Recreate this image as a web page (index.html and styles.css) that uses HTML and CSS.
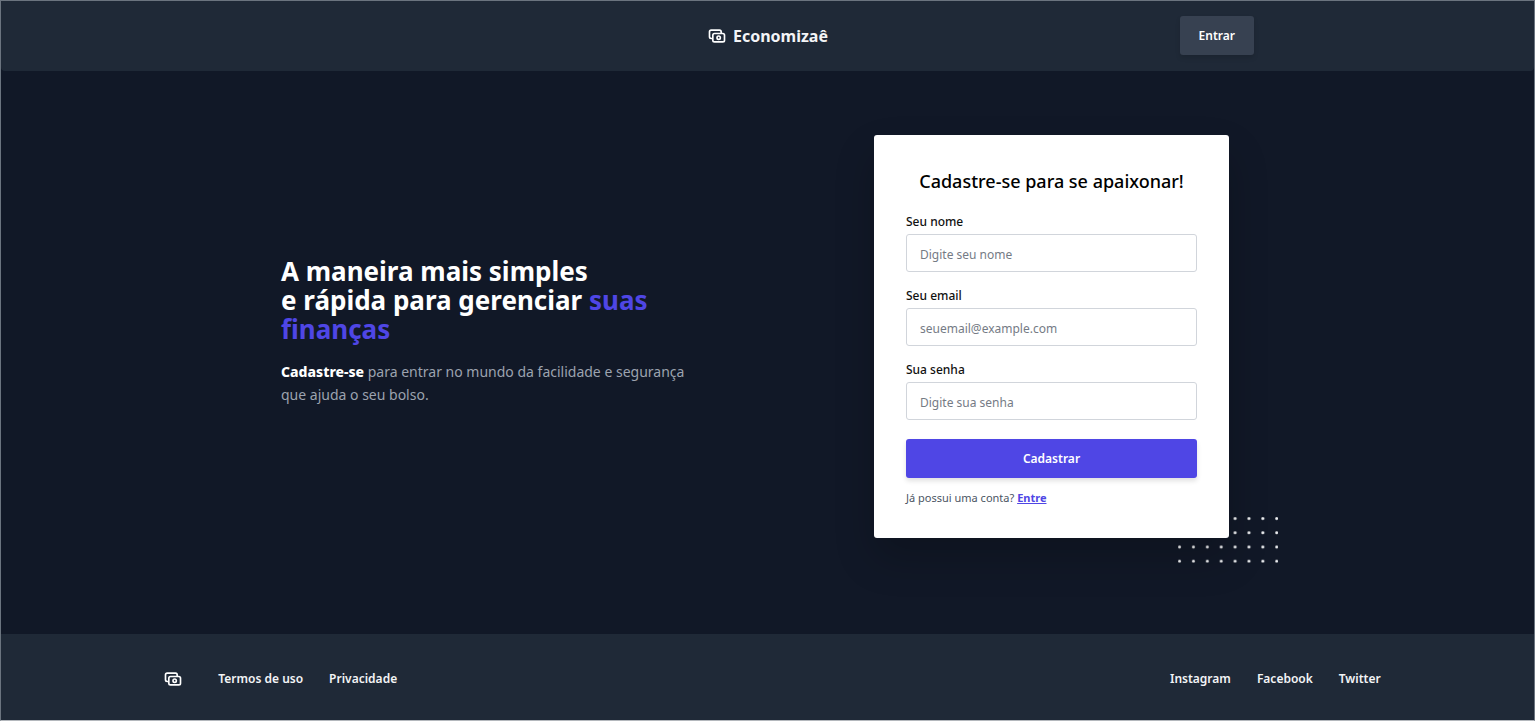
FILE: index.html
```html
<!DOCTYPE html>
<html lang="pt-BR">
<head>
<meta charset="utf-8">
<meta name="viewport" content="width=device-width, initial-scale=1">
<title>Economizaê</title>
<link rel="stylesheet" href="styles.css">
</head>
<body>
<div class="page">
  <header class="header">
    <div class="header-inner">
      <a class="brand" href="#">
        <svg class="icon" viewBox="0 0 24 24" aria-hidden="true"><path d="M17 9V7a2 2 0 0 0-2-2H5a2 2 0 0 0-2 2v6a2 2 0 0 0 2 2h2m2 4h10a2 2 0 0 0 2-2v-6a2 2 0 0 0-2-2H9a2 2 0 0 0-2 2v6a2 2 0 0 0 2 2zm7-5a2 2 0 1 1-4 0 2 2 0 0 1 4 0z"/></svg>
        <span>Economizaê</span>
      </a>
      <button class="button button-login" type="button">Entrar</button>
    </div>
  </header>

  <main class="hero">
    <section class="intro">
      <h1 class="headline">A maneira mais simples<br>e rápida para gerenciar <span class="accent">suas finanças</span></h1>
      <p class="lead"><strong>Cadastre-se</strong> para entrar no mundo da facilidade e segurança que ajuda o seu bolso.</p>
    </section>

    <section class="signup">
      <svg class="dots" viewBox="0 0 72 33" aria-hidden="true">
        <defs><pattern id="dot" width="10" height="10.25" patternUnits="userSpaceOnUse"><circle cx="1.1" cy="1.1" r="1.1"/></pattern></defs>
        <rect width="72.3" height="33" fill="url(#dot)"/>
      </svg>
      <form class="card">
        <h2 class="card-title">Cadastre-se para se apaixonar!</h2>
        <div class="field">
          <label for="name">Seu nome</label>
          <input id="name" type="text" placeholder="Digite seu nome">
        </div>
        <div class="field">
          <label for="email">Seu email</label>
          <input id="email" type="email" placeholder="seuemail@example.com">
        </div>
        <div class="field">
          <label for="password">Sua senha</label>
          <input id="password" type="password" placeholder="Digite sua senha">
        </div>
        <button class="button button-primary" type="submit">Cadastrar</button>
        <p class="note">Já possui uma conta? <a href="#">Entre</a></p>
      </form>
    </section>
  </main>

  <footer class="footer">
    <nav class="links">
      <a class="home" href="#" aria-label="Economizaê"><svg class="icon" viewBox="0 0 24 24" aria-hidden="true"><path d="M17 9V7a2 2 0 0 0-2-2H5a2 2 0 0 0-2 2v6a2 2 0 0 0 2 2h2m2 4h10a2 2 0 0 0 2-2v-6a2 2 0 0 0-2-2H9a2 2 0 0 0-2 2v6a2 2 0 0 0 2 2zm7-5a2 2 0 1 1-4 0 2 2 0 0 1 4 0z"/></svg></a>
      <a href="#">Termos de uso</a>
      <a href="#">Privacidade</a>
    </nav>
    <nav class="links">
      <a href="#">Instagram</a>
      <a href="#">Facebook</a>
      <a href="#">Twitter</a>
    </nav>
  </footer>
</div>
</body>
</html>
```
FILE: styles.css
```css
*, *::before, *::after { box-sizing: border-box; }

body {
  margin: 0;
  background: #111827;
  color: #fff;
  font: 12px/20px "Noto Sans", "Open Sans", sans-serif;
}

h1, h2, p { margin: 0; }
a { color: inherit; text-decoration: none; }
input, button { font: inherit; }

.page {
  display: flex;
  flex-direction: column;
  min-height: 100vh;
  border: 1px solid #6b747f;
  border-bottom-color: #b4b8bd;
}

.header {
  padding: 15px 24px 16px;
  background: #1f2937;
  border-radius: 0 0 4px 4px;
}

.header-inner {
  display: grid;
  grid-template-columns: 1fr auto 1fr;
  align-items: center;
  max-width: 973px;
  margin: 0 auto;
}

.brand {
  display: flex;
  grid-column: 2;
  align-items: center;
  gap: 6px;
  font-size: 16px;
  font-weight: 700;
  color: #f3f4f6;
}

.icon {
  display: block;
  width: 20px;
  height: 20px;
  fill: none;
  stroke: #fff;
  stroke-width: 2;
  stroke-linecap: round;
  stroke-linejoin: round;
}

.button {
  height: 39px;
  padding: 1px 19px 0;
  border: 0;
  border-radius: 3px;
  color: #fff;
  font-weight: 600;
  cursor: pointer;
  box-shadow: 0 3px 5px rgba(0, 0, 0, .12);
}

.button-login {
  justify-self: end;
  background: #374151;
}

.hero {
  display: grid;
  flex: 1;
  grid-template-columns: 410px 405px;
  justify-content: space-between;
  align-items: center;
  width: 100%;
  max-width: 1023px;
  margin: 0 auto;
  padding: 64px 0 96px;
  padding-left: 25px;
}

.intro { padding-bottom: 11px; }

.headline {
  font-size: 26px;
  line-height: 29px;
  font-weight: 700;
}

.accent { color: #4f46e5; }

.lead {
  margin-top: 16px;
  color: #9ca3af;
  font-size: 14px;
  line-height: 23px;
}

.lead strong { color: #fff; font-weight: 800; }

.signup {
  position: relative;
  padding-right: 50px;
}

.dots {
  position: absolute;
  right: 1px;
  bottom: -25px;
  width: 100px;
  fill: #f3f4f6;
}

.card {
  position: relative;
  padding: 32px 32px 30px;
  border-radius: 3px;
  background: #fff;
  color: #111;
  box-shadow: 0 20px 40px rgba(0, 0, 0, .2);
}

.card-title {
  margin-bottom: 17px;
  font-size: 18px;
  line-height: 28px;
  font-weight: 500;
  text-align: center;
  color: #000;
}

.field { margin-bottom: 14px; }
.field label { display: block; margin-bottom: 2px; font-weight: 500; }

.field input {
  display: block;
  width: 100%;
  height: 38px;
  padding: 2px 13px 0;
  border: 1px solid #d1d5db;
  border-radius: 3px;
  background: #fff;
  color: #111827;
}

.field input::placeholder { color: #757b85; opacity: 1; }

.button-primary {
  display: block;
  width: 100%;
  margin-top: 19px;
  background: #4f46e5;
}

.note {
  margin-top: 10px;
  color: #4b5563;
  font-size: 11px;
}

.note a {
  color: #4f46e5;
  font-weight: 700;
  text-decoration: underline;
}

.footer {
  display: flex;
  justify-content: space-between;
  align-items: center;
  width: 100%;
  padding: 35px 10% 31px;
  background: #1f2937;
  font-weight: 600;
  color: #f3f4f6;
}

.links { display: flex; align-items: center; gap: 26px; }
.home { margin: 0 9px; }
```
